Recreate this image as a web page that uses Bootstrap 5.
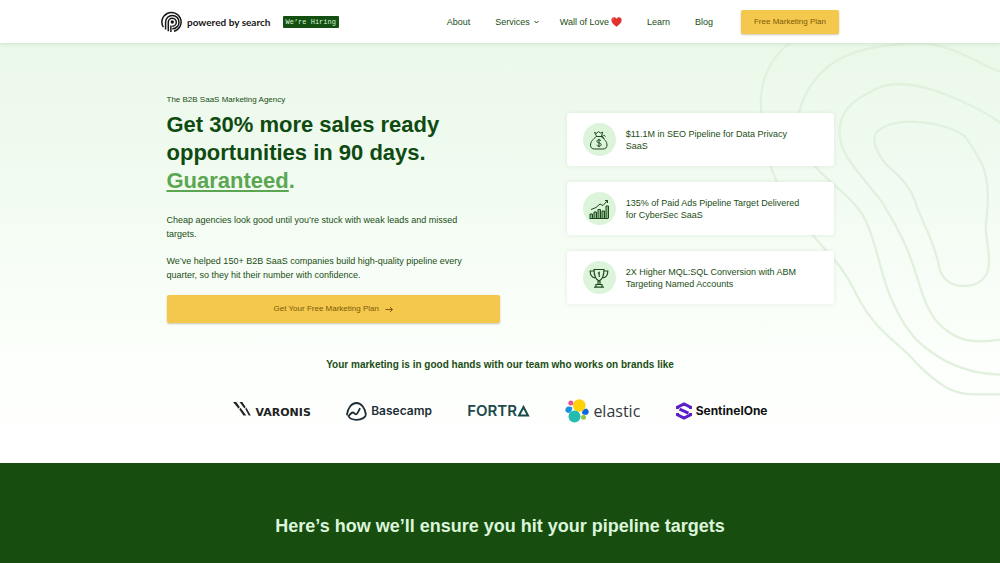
<!DOCTYPE html>
<html lang="en">
<head>
<meta charset="utf-8">
<meta name="viewport" content="width=device-width, initial-scale=1">
<title>Powered by Search</title>
<link href="https://cdn.jsdelivr.net/npm/bootstrap@5.3.0/dist/css/bootstrap.min.css" rel="stylesheet">
<style>
  body { font-family: "Liberation Sans", Arial, sans-serif; font-size: 9px; line-height: 14px; color: #1a4d14; background: #fff; }
  .site-header { box-shadow: 0 1px 4px rgba(26, 77, 20, .12); z-index: 2; }
  .wrap-header { max-width: 678px; min-height: 43px; }
  .wrap-main { max-width: 667px; }
  .brand-name { font: 700 10px/14px Lato, sans-serif; color: #161616; }
  .hiring { font: 7px/12px "Liberation Mono", monospace; background: #124f10; color: #d5f3d2; border-radius: 1px; padding: 0 3px; margin-left: 12px; }
  .menu { gap: 25px; }
  .menu a { color: #1a4d14; text-decoration: none; }
  .menu-main { gap: 21px; }
  .menu-heart { gap: 2px; }
  .btn-gold { --bs-btn-color: #7b5a08; --bs-btn-bg: #f3c84d; --bs-btn-hover-bg: #ecbd38; --bs-btn-hover-color: #7b5a08; --bs-btn-border-width: 0; --bs-btn-border-radius: 2px; --bs-btn-font-size: 8px; box-shadow: 0 1px 2px rgba(90, 70, 0, .3); line-height: 12px; }
  .btn-head { --bs-btn-padding-y: 6px; --bs-btn-padding-x: 13px; margin-left: 3px; }
  .btn-hero { --bs-btn-padding-y: 8px; gap: 6px; }
  .hero { background: linear-gradient(#eaf8e9, #f3fcf3 40%, #fcfffb 75%, #fff); padding: 51px 0 40px; }
  .contours { z-index: 0; }
  .tagline { font-size: 8px; line-height: 12px; margin-bottom: 5px; }
  h1 { font-size: 22px; line-height: 28px; font-weight: 700; color: #0f4a10; margin-bottom: 18px; }
  .promise { color: #5ba651; }
  .hero p.copy { max-width: 316px; margin-bottom: 13px; }
  .proof { width: 40%; gap: 16px; }
  .proof-card { --bs-card-border-width: 0; --bs-card-border-radius: 3px; box-shadow: 0 0 5px rgba(26, 77, 20, .09); line-height: 12px; padding: 10px 28px 10px 16px; gap: 10px; }
  .proof-icon { width: 33px; height: 33px; background: #dcf4da; }
  .brands-title { font-size: 10px; line-height: 16px; font-weight: 700; margin: 34px 0 26px; }
  .brands { max-width: 535px; height: 24px; }
  .t-varonis { font: 700 11px/14px "DejaVu Sans", sans-serif; color: #222; }
  .t-basecamp { font: 600 12px/14px Inter, sans-serif; color: #1d2d35; }
  .t-fortra { font: 600 15px/16px Inter, sans-serif; color: #1c4a4a; }
  .t-elastic { font: 16px/20px "Open Sans", sans-serif; color: #343741; }
  .t-sentinel { font: 700 12px/14px Inter, sans-serif; color: #111; }
  .plan { background: #184d10; padding: 51px 0 26px; }
  .plan h2 { font-size: 18px; line-height: 24px; font-weight: 700; color: #dcf5da; }
</style>
</head>
<body class="min-vh-100 d-flex flex-column">

<header class="site-header bg-white position-relative">
  <nav class="wrap-header mx-auto d-flex align-items-center">
    <a href="#" class="d-flex align-items-center text-decoration-none" aria-label="Powered by Search home">
      <svg width="22" height="22" viewBox="0 0 22 22" fill="none" stroke="#161616" stroke-width="1.5">
        <path d="M2.400 16.200A9.600 9.600 0 1 1 13 20.300"/>
        <path d="M4.600 18.500V11a6.700 6.700 0 1 1 6.700 6.800"/>
        <path d="M7.300 20.300V11a4 4 0 1 1 4 4.200"/>
        <path d="M9.900 21V14.500"/>
        <circle cx="11.300" cy="11" r="1.700" fill="#161616" stroke="none"/>
      </svg>
      <span class="brand-name ms-1">powered by search</span>
    </a>
    <a href="#" class="hiring text-decoration-none">We’re Hiring</a>
    <div class="menu d-flex align-items-center ms-auto">
      <a href="#">About</a>
      <div class="menu-main d-flex align-items-center">
        <a href="#" class="d-flex align-items-center gap-1">Services
          <svg width="5" height="4" viewBox="0 0 5 4" fill="none" stroke="#1a4d14" stroke-width="1"><path d="M.4.9 2.5 3 4.6.9"/></svg></a>
        <a href="#" class="menu-heart d-flex align-items-center">Wall of Love
          <svg width="11" height="10" viewBox="0 0 22 20"><path d="M11 19.5C7 16 1 12 .7 6.400.5 2.500 3.200.5 6 .5c2.200 0 4 1.200 5 3.200 1-2 2.800-3.200 5-3.200 2.800 0 5.500 2 5.300 5.900C21 12 15 16 11 19.500z" fill="#e2322d"/><path d="M3 6c.2-2 1.500-3 3.200-3" stroke="#ff8a7a" stroke-width="1.500" fill="none"/></svg></a>
      </div>
      <a href="#">Learn</a>
      <a href="#">Blog</a>
      <button type="button" class="btn btn-gold btn-head">Free Marketing Plan</button>
    </div>
  </nav>
</header>

<main class="flex-grow-1 d-flex flex-column">
<section class="hero position-relative">
  <svg class="contours position-absolute top-0 end-0" width="260" height="377" viewBox="0 9 780 1131" fill="none" stroke="#e1f1de" stroke-width="7" aria-hidden="true">
    <path d="M150 9C90 50 55 130 64 215C68 290 85 370 110 425C145 500 190 550 235 605C290 665 320 700 350 765C410 880 470 900 530 970C610 1050 650 1062 700 1063H780"/>
    <path d="M780 95C720 75 640 10 530 9C420 14 330 30 270 75C220 115 190 165 178 215C172 290 190 350 240 395C300 455 360 490 385 560C420 650 425 720 460 790C500 880 540 920 620 965C680 995 730 1003 780 1004"/>
    <path d="M780 248C730 210 680 190 640 173C580 148 530 132 470 132C420 134 390 155 350 180C310 210 298 240 298 280C300 350 370 410 425 485C490 590 510 640 540 740C565 820 590 860 650 890C690 908 740 906 780 899"/>
    <path d="M403 300C400 265 450 245 520 245C570 248 630 260 670 285C690 305 705 335 725 370C750 430 745 490 737 560C740 610 750 640 746 680C740 720 710 738 670 738C630 736 605 715 597 680C585 610 550 550 530 500C515 440 480 410 440 375C415 345 404 325 403 300Z"/>
  </svg>

  <div class="wrap-main mx-auto position-relative">
    <div class="d-flex justify-content-between align-items-center">
      <div class="w-50">
        <p class="tagline">The B2B SaaS Marketing Agency</p>
        <h1>Get 30% more sales ready opportunities in 90 days. <span class="promise"><u>Guaranteed</u>.</span></h1>
        <p class="copy">Cheap agencies look good until you’re stuck with weak leads and missed targets.</p>
        <p class="copy">We’ve helped 150+ B2B SaaS companies build high-quality pipeline every quarter, so they hit their number with confidence.</p>
        <button type="button" class="btn btn-gold btn-hero w-100 d-flex justify-content-center align-items-center">Get Your Free Marketing Plan
          <svg width="8" height="7" viewBox="0 0 8 7" fill="none" stroke="currentColor" stroke-width="1"><path d="M.5 3.500h7M5 1l2.500 2.500L5 6"/></svg></button>
      </div>

      <div class="proof d-flex flex-column">
        <div class="card proof-card flex-row align-items-center">
          <span class="proof-icon rounded-circle d-flex align-items-center justify-content-center flex-shrink-0">
            <svg width="20" height="20" viewBox="0 0 20 20" fill="none" stroke="#1d4a1d" stroke-width="1"><path d="M7.500 6.500C4 9 1.500 12 1.500 15c0 2.500 1.500 4 4 4h8.500c2.500 0 4-1.500 4-4 0-3-2.500-6-6-8.500zM7 6.500h6M7.500 6 5.500 2.500l2.300.8L9.500 1.500l1.800 1.500 2.500-.8L12.500 6M13 6.500c2-1.500 3-1 3.500 0M13 6.500c1.500.5 2 1.500 2 2.500"/><path d="M12 10.800c-.5-.8-1.200-1-2.100-1-1.200 0-2 .6-2 1.500 0 2.200 4.300 1 4.300 3.300 0 1-.9 1.600-2.200 1.600-1 0-1.800-.4-2.300-1.200M10 8.800v8.400"/></svg>
          </span>
          <span class="proof-text">$11.1M in SEO Pipeline for Data Privacy SaaS</span>
        </div>
        <div class="card proof-card flex-row align-items-center">
          <span class="proof-icon rounded-circle d-flex align-items-center justify-content-center flex-shrink-0">
            <svg width="20" height="20" viewBox="0 0 20 20" fill="none" stroke="#1d4a1d" stroke-width="1"><path fill="#8fbb8c" d="M1 19v-4h2.500v4M5 19v-6h2.500v6M9 19v-8.500h2.500V19M13 19v-7h2.500v7M17 19V7h2.500v12"/><path d="M.5 19.500h19M2 10.500l5-2 4-3.500 3 1.500L18.500 1.500M18.500 4V1.500H16"/></svg>
          </span>
          <span class="proof-text">135% of Paid Ads Pipeline Target Delivered for CyberSec SaaS</span>
        </div>
        <div class="card proof-card flex-row align-items-center">
          <span class="proof-icon rounded-circle d-flex align-items-center justify-content-center flex-shrink-0">
            <svg width="20" height="20" viewBox="0 0 20 20" fill="none" stroke="#1d4a1d" stroke-width="1.200"><path d="M5 1.500h10c0 6-1 9.500-5 11.500C6 11 5 7.500 5 1.500zM5 3H1.200c0 4 1.800 6.500 5 7M15 3h3.800c0 4-1.800 6.500-5 7M9 13v3M11 13v3M7 16.500h6V19H7zM5 19.200h10M9 5.500l1.200-1V9"/></svg>
          </span>
          <span class="proof-text">2X Higher MQL:SQL Conversion with ABM Targeting Named Accounts</span>
        </div>
      </div>
    </div>

    <p class="brands-title text-center">Your marketing is in good hands with our team who works on brands like</p>
    <div class="brands mx-auto d-flex justify-content-between align-items-center">
      <div class="d-flex align-items-end">
        <svg class="mb-1 me-1" width="19" height="14" viewBox="0 0 19 14" fill="#222"><path d="M0 0h3.200l3.600 5-1.200 1.800zM6.300 7.500 7.500 5.700l5.800 7.800h-2.800zM6.500 0h2.800l3.300 5-1.200 1.500zM12.300 7 13.300 5.500l4.500 8h-2z"/></svg>
        <span class="t-varonis">VARONIS</span>
      </div>
      <div class="d-flex align-items-center">
        <svg class="me-1" width="21" height="19" viewBox="0 0 21 19" fill="none" stroke="#1d2d35" stroke-width="1.800" stroke-linecap="round" stroke-linejoin="round"><path d="M1 12.500C2 6 5.500 1 10.500 1c5.200 0 8.500 5.500 9.300 11 .4 3.300-4.300 5.800-9.300 5.800-3.800 0-7-1.500-8-3.800 1.500-1 2.500-3.500 4.200-3.500 1.500 0 1.800 1.800 3 1.800 1.700 0 2.800-3 4-5.500"/></svg>
        <span class="t-basecamp">Basecamp</span>
      </div>
      <div class="d-flex align-items-center">
        <span class="t-fortra">FORTR</span>
        <svg width="13" height="12" viewBox="0 0 13 12" fill="none" stroke="#1c4a4a" stroke-width="2" role="img" aria-label="A"><path d="M2 10.500 6.500 2 11 10.500z"/></svg>
      </div>
      <div class="d-flex align-items-center">
        <svg class="me-1" width="24" height="24" viewBox="0 0 24 24"><circle cx="14.300" cy="6.500" r="6.300" fill="#fed10a"/><circle cx="9.500" cy="17.500" r="6" fill="#24bbb1"/><circle cx="5.800" cy="4" r="2.500" fill="#ef5098"/><path d="M1 9c1.500-2 4-1.800 6.300-.6 0 2-.5 4-3.300 5.600C.8 14-.6 11.500 1 9z" fill="#1793e0"/><path d="M16.800 14.200c.5-2.700 2-4 4.200-4.800 3 1 3.500 4 1.700 5.800-1.800 1.400-4.200.4-5.900-1z" fill="#0b64dd"/><circle cx="18.500" cy="18.300" r="2.500" fill="#93c83e"/></svg>
        <span class="t-elastic">elastic</span>
      </div>
      <div class="d-flex align-items-center">
        <svg class="me-1" width="16" height="18" viewBox="0 0 16 18" fill="none" stroke="#5a1ecb" stroke-width="3"><path d="M1.500 7V5.200L8 1.900l6.500 3.300V7M1.500 11v1.800L8 16.100l6.500-3.300V11M3.500 7.200l9 3.900"/></svg>
        <span class="t-sentinel">SentinelOne</span>
      </div>
    </div>
  </div>
</section>

<section class="plan flex-grow-1 text-center">
  <h2 class="mb-0">Here’s how we’ll ensure you hit your pipeline targets</h2>
</section>
</main>

<script src="https://cdn.jsdelivr.net/npm/bootstrap@5.3.0/dist/js/bootstrap.bundle.min.js"></script>
</body>
</html>
